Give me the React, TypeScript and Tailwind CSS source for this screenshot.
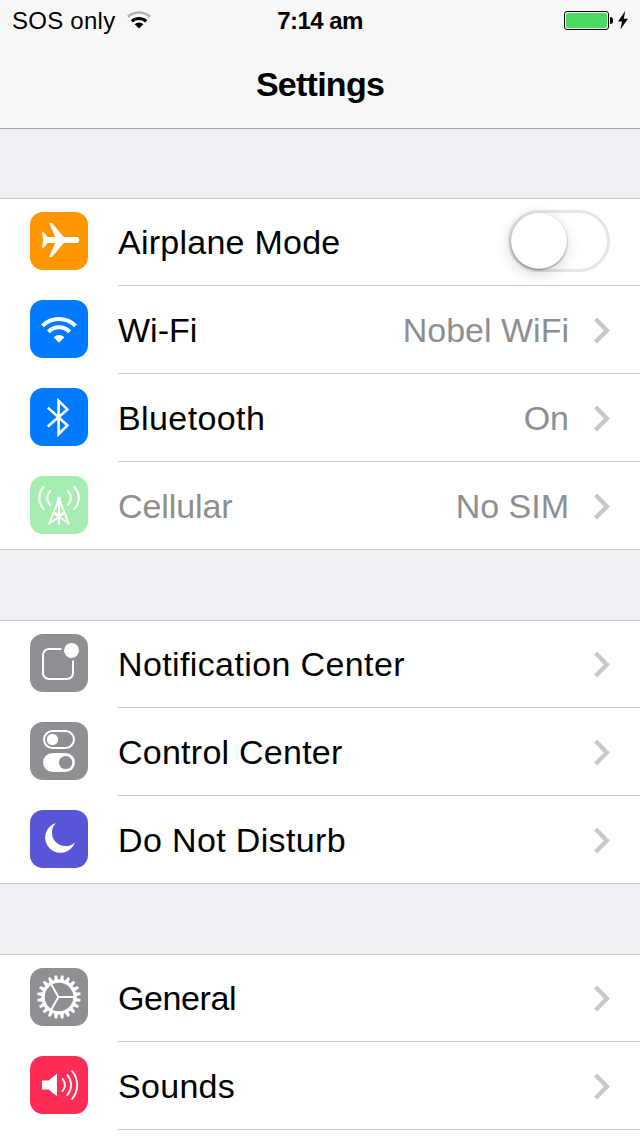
import type { ReactNode } from "react";

function AirplaneIcon() {
  return (
    <path
      fill="#fff"
      d="M12 20h1.7l3.7 5h7.9L19 11h3l11.7 14h12.6a3 3 0 0 1 0 6H33.7L22 45h-3l6.3-14h-7.9l-3.7 5H12l1.2-8z"
    />
  );
}

function WifiIcon() {
  return (
    <>
      <g fill="none" stroke="#fff" strokeWidth="4">
        <path d="M12.5 25.8a23.4 23.4 0 0 1 33 0" />
        <path d="M18.4 31.8a14.9 14.9 0 0 1 21.2 0" />
      </g>
      <path fill="#fff" d="M29 42.7l-5.4-5.5a7.7 7.7 0 0 1 10.8 0z" />
    </>
  );
}

function BluetoothIcon() {
  return (
    <path
      fill="none"
      stroke="#fff"
      strokeWidth="2.6"
      d="M17.8 19.6L37.4 37.3L28.6 46.2V12.8L37.4 21.4L17.8 38.6"
    />
  );
}

function CellularIcon() {
  return (
    <>
      <circle cx="29" cy="23" r="2.2" fill="#fff" />
      <g fill="none" stroke="#fff" strokeWidth="2">
        <path d="M29 23v26M28.6 24L19 48M29.4 24L39 48" />
        <path strokeWidth="1.6" d="M18.5 48L34 37.5M39.5 48L24 37.5M24.5 36.5L29 39.5L33.5 36.5" />
        <path
          strokeWidth="2.2"
          strokeLinecap="round"
          d="M20 15.2c-3.8 4-3.8 9.6 0 13.6M38 15.2c3.8 4 3.8 9.6 0 13.6M13.6 10.9c-5.8 6.6-5.8 15.4 0 22M44.4 10.9c5.8 6.6 5.8 15.4 0 22"
        />
      </g>
    </>
  );
}

function NotificationIcon() {
  return (
    <>
      <path
        fill="none"
        stroke="#fff"
        strokeWidth="2"
        d="M31.5 15H19a6 6 0 0 0-6 6v18a6 6 0 0 0 6 6h18a6 6 0 0 0 6-6V26.5"
      />
      <circle cx="41.5" cy="16.4" r="7.5" fill="#fff" />
    </>
  );
}

function ControlIcon() {
  return (
    <>
      <rect x="14" y="9" width="30" height="17" rx="8.5" fill="none" stroke="#fff" strokeWidth="2" />
      <circle cx="22.4" cy="17.5" r="5.7" fill="#fff" />
      <rect x="13" y="31" width="32" height="19" rx="9.5" fill="#fff" />
      <circle cx="35.6" cy="40.5" r="6.6" fill="#8e8e93" />
    </>
  );
}

function MoonIcon() {
  return <path fill="#fff" d="M26 12.9A15.3 15.3 0 1 0 45 32.2A13.5 13.5 0 0 1 26 12.9z" />;
}

function GearIcon() {
  const teeth = Array.from({ length: 20 }, (_, i) => 9 + i * 18);
  return (
    <>
      <g fill="#fff">
        {teeth.map((angle) => (
          <path key={angle} d="M26.8 12.8L27.8 7.2h2.4l1 5.6z" transform={`rotate(${angle} 29 29)`} />
        ))}
      </g>
      <circle cx="29" cy="29" r="15.9" fill="none" stroke="#fff" strokeWidth="3.2" />
      <path fill="none" stroke="#fff" strokeWidth="2" d="M28.4 29H44M28.4 29l-7.4-13M28.4 29l-7.4 13" />
    </>
  );
}

function SoundIcon() {
  return (
    <>
      <path fill="#fff" d="M12 24.5h6.5l8.5-6.8v22.6l-8.5-6.8H12z" />
      <g fill="none" stroke="#fff" strokeWidth="2" strokeLinecap="round">
        <path d="M32.6 23c3 3.8 3 8.2 0 12" />
        <path d="M37.4 19c4.8 6.2 4.8 13.8 0 20" />
        <path d="M42.2 15c6.6 8.4 6.6 19.6 0 28" />
      </g>
    </>
  );
}

function Chevron() {
  return (
    <svg className="mt-[17px] ml-[25px] h-[27px] w-4" viewBox="0 0 16 27">
      <path d="M1.6 2.1L12.9 13.5L1.6 24.9" fill="none" stroke="#c7c7cc" strokeWidth="4.3" />
    </svg>
  );
}

function Toggle() {
  return (
    <div className="-mt-0.5 h-[62px] w-[102px] rounded-full border-[3px] border-[#e5e5e5]">
      <div className="size-14 rounded-full bg-white shadow-[0_1px_2px_rgba(0,0,0,.45),-1px_4px_16px_rgba(0,0,0,.18)]" />
    </div>
  );
}

type Item = {
  label: string;
  labelClass: string;
  tile: string;
  icon: ReactNode;
  value?: string;
  toggle?: boolean;
};

const groups: Item[][] = [
  [
    { label: "Airplane Mode", labelClass: "text-black tracking-[0.25px]", tile: "bg-[#ff9500]", icon: <AirplaneIcon />, toggle: true },
    { label: "Wi-Fi", labelClass: "text-black", tile: "bg-[#007aff]", icon: <WifiIcon />, value: "Nobel WiFi" },
    { label: "Bluetooth", labelClass: "text-black tracking-[0.4px]", tile: "bg-[#007aff]", icon: <BluetoothIcon />, value: "On" },
    { label: "Cellular", labelClass: "text-[#8e8e8e] tracking-[-0.1px]", tile: "bg-[#a6edb2]", icon: <CellularIcon />, value: "No SIM" },
  ],
  [
    { label: "Notification Center", labelClass: "text-black tracking-[0.38px]", tile: "bg-[#8e8e93]", icon: <NotificationIcon /> },
    { label: "Control Center", labelClass: "text-black tracking-[0.25px]", tile: "bg-[#8e8e93]", icon: <ControlIcon /> },
    { label: "Do Not Disturb", labelClass: "text-black tracking-[0.36px]", tile: "bg-[#5856d6]", icon: <MoonIcon /> },
  ],
  [
    { label: "General", labelClass: "text-black tracking-[-0.4px]", tile: "bg-[#8e8e93]", icon: <GearIcon /> },
    { label: "Sounds", labelClass: "text-black tracking-[0.3px]", tile: "bg-[#ff2d55]", icon: <SoundIcon /> },
  ],
];

function Row({ item, last }: { item: Item; last: boolean }) {
  return (
    <li className={`flex h-[88px] pl-[30px] first:-mt-px ${last ? "border-b border-[#c8c7cc]" : ""}`}>
      <div className={`mt-3.5 size-[58px] shrink-0 overflow-hidden rounded-[13px] ${item.tile}`}>
        <svg className="size-full" viewBox="0 0 58 58">
          {item.icon}
        </svg>
      </div>
      <div className={`ml-[30px] flex flex-1 items-start pt-3.5 pr-[30px] ${last ? "" : "border-b border-[#c8c7cc]"}`}>
        <span className={`flex-1 text-[34px] leading-[60px] whitespace-nowrap ${item.labelClass}`}>{item.label}</span>
        {item.value && (
          <span className="text-[34px] leading-[60px] whitespace-nowrap text-[#8e8e93]">{item.value}</span>
        )}
        {item.toggle ? <Toggle /> : <Chevron />}
      </div>
    </li>
  );
}

function StatusBar() {
  return (
    <div className="grid h-10 grid-cols-3 items-start px-3 text-[24px] leading-[42px] text-black">
      <div className="flex">
        <span className="tracking-[0.25px] whitespace-nowrap">SOS only</span>
        <svg className="mt-2.5 ml-3 h-[19px] w-6" viewBox="0 0 24 19">
          <path d="M.9 6.8a16.5 16.5 0 0 1 22.2 0" fill="none" stroke="#b3b3b3" strokeWidth="2.7" />
          <path d="M4.8 11.4a10.4 10.4 0 0 1 14.4 0" fill="none" stroke="#000" strokeWidth="2.9" />
          <path d="M12 18.6l-4.4-4.4a6.3 6.3 0 0 1 8.8 0z" />
        </svg>
      </div>
      <span className="text-center font-bold tracking-[-0.55px] whitespace-nowrap">7:14 am</span>
      <div className="flex h-[41px] items-center justify-end">
        <div className="h-[19px] w-[45px] rounded-[3px] border border-black p-px">
          <div className="h-full rounded-[2px] bg-[#4cd964]" />
        </div>
        <div className="ml-px h-[7px] w-[3px] rounded-r-full bg-black" />
        <svg className="ml-[5px] h-[19px] w-2.5" viewBox="0 0 10 19">
          <path d="M7.2 0L0 10.4h4L2.4 18.6L10 7.8H5.8z" />
        </svg>
      </div>
    </div>
  );
}

export default function App() {
  return (
    <div className="h-[1136px] w-[640px] overflow-hidden bg-[#efeff4] font-['Liberation_Sans',Arial,sans-serif]">
      <header className="h-[129px] border-b border-[#a7a7ac] bg-[#f7f7f7]">
        <StatusBar />
        <h1 className="text-center text-[34px] leading-[88px] font-bold tracking-[-0.75px] text-black">Settings</h1>
      </header>
      <main className="flex flex-col gap-[70px] pt-[69px]">
        {groups.map((items, index) => {
          const open = index === groups.length - 1;
          return (
            <ul key={index} className={`border-t border-[#c8c7cc] bg-white ${open ? "pb-20" : ""}`}>
              {items.map((item, i) => (
                <Row key={item.label} item={item} last={!open && i === items.length - 1} />
              ))}
            </ul>
          );
        })}
      </main>
    </div>
  );
}
